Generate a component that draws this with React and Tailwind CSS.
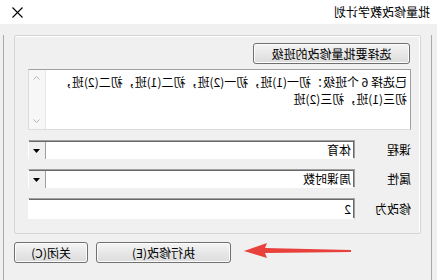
import React from "react";

// The reference is a mirrored screenshot: the dialog is laid out normally and flipped as a whole.
function Combo({ value }) {
  return (
    <div className="flex h-[19px] w-[327px] border-t border-l border-b border-r border-t-[#a0a0a0] border-l-[#a0a0a0] border-b-white border-r-white bg-white shadow-[inset_1px_1px_0_#696969]">
      <div className="flex-1 pl-[3px] pt-[1px] leading-[16px]">{value}</div>
      <div className="flex h-[17px] w-[17px] items-center justify-center border-l border-[#a0a0a0] bg-[#f0f0f0] mt-[1px]">
        <svg width="7" height="4" viewBox="0 0 7 4">
          <polygon points="0,0 7,0 3.5,4" fill="#000" />
        </svg>
      </div>
    </div>
  );
}

function Btn({ children, w }) {
  return (
    <div
      className={`flex h-[21px] items-center justify-center rounded-[3px] border border-[#707070] bg-gradient-to-b from-[#f4f4f4] to-[#dcdcdc] shadow-[inset_0_0_0_1px_#fcfcfc] ${w}`}
    >
      {children}
    </div>
  );
}

export default function App() {
  return (
    <div className="relative h-[280px] w-[437px] overflow-hidden bg-[#f0f0f0] -scale-x-100 font-['Noto_Sans_CJK_SC','Microsoft_YaHei',sans-serif] text-[12px] text-black">
      {/* title bar */}
      <div className="flex h-[24px] items-center justify-between bg-white pl-[7px] pr-[12px]">
        <span className="leading-[14px]">批量修改教学计划</span>
        <svg width="11" height="11" viewBox="0 0 11 11">
          <path d="M0.5 0.5 L10.5 10.5 M10.5 0.5 L0.5 10.5" stroke="#000" strokeWidth="1.1" />
        </svg>
      </div>

      {/* window body */}
      <div className="ml-[5px] mr-[3px] h-[253px] border-x border-b border-[#a9a9a9]">
        {/* group box */}
        <div className="mx-[10px] mt-[11px] h-[199px] rounded-[2px] border border-[#d5d5d5] shadow-[inset_1px_1px_0_#fff] pl-[9px] pt-[7px]">
          <div className="ml-[1px]">
            <Btn w="w-[157px] h-[19px]">选择要批量修改的班级</Btn>
          </div>

          {/* selected classes */}
          <div className="mt-[5px] flex h-[61px] w-[383px] border border-t-[#a0a0a0] border-l-[#a0a0a0] border-b-[#dcdcdc] border-r-[#dcdcdc] bg-white">
            <div className="flex-1 pl-[3px] pt-[3px] leading-[17px]">
              已选择 6 个班级：初一(1)班，初一(2)班，初二(1)班，初二(2)班，
              <br />
              初三(1)班，初三(2)班
            </div>
            <div className="flex w-[17px] flex-col items-center justify-between border-l border-[#e8e8e8] bg-[#f7f7f7] py-[6px]">
              <svg width="7" height="4" viewBox="0 0 7 4">
                <polyline points="0.5,3.5 3.5,0.5 6.5,3.5" fill="none" stroke="#b4b4b4" strokeWidth="1" />
              </svg>
              <svg width="7" height="4" viewBox="0 0 7 4">
                <polyline points="0.5,0.5 3.5,3.5 6.5,0.5" fill="none" stroke="#b4b4b4" strokeWidth="1" />
              </svg>
            </div>
          </div>

          {/* fields */}
          <div className="mt-[10px] flex flex-col gap-[10px]">
            <div className="flex items-center">
              <span className="w-[56px]">课程</span>
              <Combo value="体育" />
            </div>
            <div className="flex items-center">
              <span className="w-[56px]">属性</span>
              <Combo value="周课时数" />
            </div>
            <div className="flex items-center">
              <span className="w-[56px]">修改为</span>
              <div className="h-[21px] w-[327px] border border-t-[#a0a0a0] border-l-[#a0a0a0] border-b-white border-r-white bg-white shadow-[inset_1px_1px_0_#696969] pl-[3px] pt-[2px] leading-[16px]">
                2
              </div>
            </div>
          </div>
        </div>

        {/* buttons */}
        <div className="mt-[8px] flex justify-end gap-[8px] pr-[10px]">
          <Btn w="w-[135px]">执行修改(E)</Btn>
          <Btn w="w-[74px]">关闭(C)</Btn>
        </div>
      </div>

      {/* red annotation arrow */}
      <svg className="absolute left-[86px] top-[242px]" width="108" height="18" viewBox="0 0 108 18">
        <polygon points="0,8 86,6 84,1 107,9 84,16 86,11 0,10" fill="#e8413b" />
      </svg>
    </div>
  );
}
